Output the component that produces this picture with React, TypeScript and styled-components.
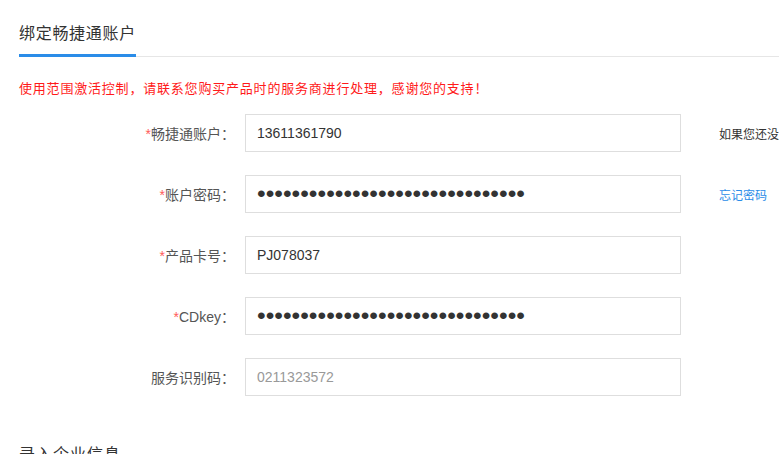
import React from 'react';
import styled, {createGlobalStyle} from 'styled-components';

const GlobalStyle = createGlobalStyle`
  html, body {
    margin: 0;
    padding: 0;
    background: #fff;
    overflow: hidden;
  }
  body {
    font-family: "Liberation Sans", "Noto Sans CJK SC", sans-serif;
    color: #333;
  }
`

type Field = {
    label: string
    required?: boolean
    value: string
    masked?: boolean
    muted?: boolean
    hint?: string
    link?: string
}

const fields: Field[] = [
    {label: '畅捷通账户', required: true, value: '13611361790', hint: '如果您还没有畅捷通账户，请先注册'},
    {label: '账户密码', required: true, value: 'a'.repeat(31), masked: true, link: '忘记密码'},
    {label: '产品卡号', required: true, value: 'PJ078037'},
    {label: 'CDkey', required: true, value: 'b'.repeat(31), masked: true},
    {label: '服务识别码', value: '0211323572', muted: true},
]

export default function App() {
    return (
        <Page>
            <GlobalStyle/>
            <TabBar>
                <Tab>绑定畅捷通账户</Tab>
            </TabBar>
            <Notice>使用范围激活控制，请联系您购买产品时的服务商进行处理，感谢您的支持！</Notice>
            <Form>
                {fields.map((f) => (
                    <Row key={f.label}>
                        <Label>
                            {f.required && <Star>*</Star>}
                            {f.label}：
                        </Label>
                        <Input
                            type={f.masked ? 'password' : 'text'}
                            value={f.value}
                            readOnly
                            $masked={f.masked}
                            $muted={f.muted}
                        />
                        <Aside>
                            {f.hint && <Hint>{f.hint}</Hint>}
                            {f.link && <HintLink href="#">{f.link}</HintLink>}
                        </Aside>
                    </Row>
                ))}
            </Form>
            <SectionTitle>录入企业信息</SectionTitle>
        </Page>
    )
}

const Page = styled.div`
  width: 779px;
  height: 454px;
  padding-left: 19px;
  box-sizing: border-box;
  overflow: hidden;
`

const TabBar = styled.div`
  display: flex;
  border-bottom: 1px solid #e6e6e6;
`

const Tab = styled.div`
  font-size: 16px;
  line-height: 22px;
  color: #333;
  padding: 23px 0 9px;
  border-bottom: 3px solid #2a8ce8;
  margin-bottom: -1px;
  letter-spacing: 0.7px;
`

const Notice = styled.p`
  margin: 22px 0 0;
  font-size: 13px;
  line-height: 20px;
  color: #ff1a1a;
  letter-spacing: 0.8px;
`

const Form = styled.div`
  display: flex;
  flex-direction: column;
  gap: 23px;
  margin-top: 15px;
`

const Row = styled.div`
  display: flex;
  align-items: center;
  height: 38px;
`

const Label = styled.label`
  flex-shrink: 0;
  width: 226px;
  padding-right: 10px;
  box-sizing: border-box;
  text-align: right;
  font-size: 14px;
  color: #555;
  white-space: nowrap;
`

const Star = styled.span`
  color: #ff5a5a;
`

const Input = styled.input<{ $masked?: boolean; $muted?: boolean }>`
  flex-shrink: 0;
  width: 436px;
  height: 38px;
  box-sizing: border-box;
  border: 1px solid #dedede;
  padding: 0 11px;
  font-family: "Liberation Sans", sans-serif;
  font-size: ${(p) => (p.$masked ? '24.7px' : '14px')};
  color: ${(p) => (p.$muted ? '#999' : '#333')};
  background: #fff;
  outline: none;
`

const Aside = styled.div`
  flex-shrink: 0;
  margin-left: 38px;
  font-size: 12px;
  white-space: nowrap;
`

const Hint = styled.span`
  color: #333;
`

const HintLink = styled.a`
  color: #2a8ce8;
  text-decoration: none;
`

const SectionTitle = styled.h2`
  margin: 45px 0 0;
  font-size: 16px;
  font-weight: normal;
  color: #333;
  letter-spacing: 1px;
`
